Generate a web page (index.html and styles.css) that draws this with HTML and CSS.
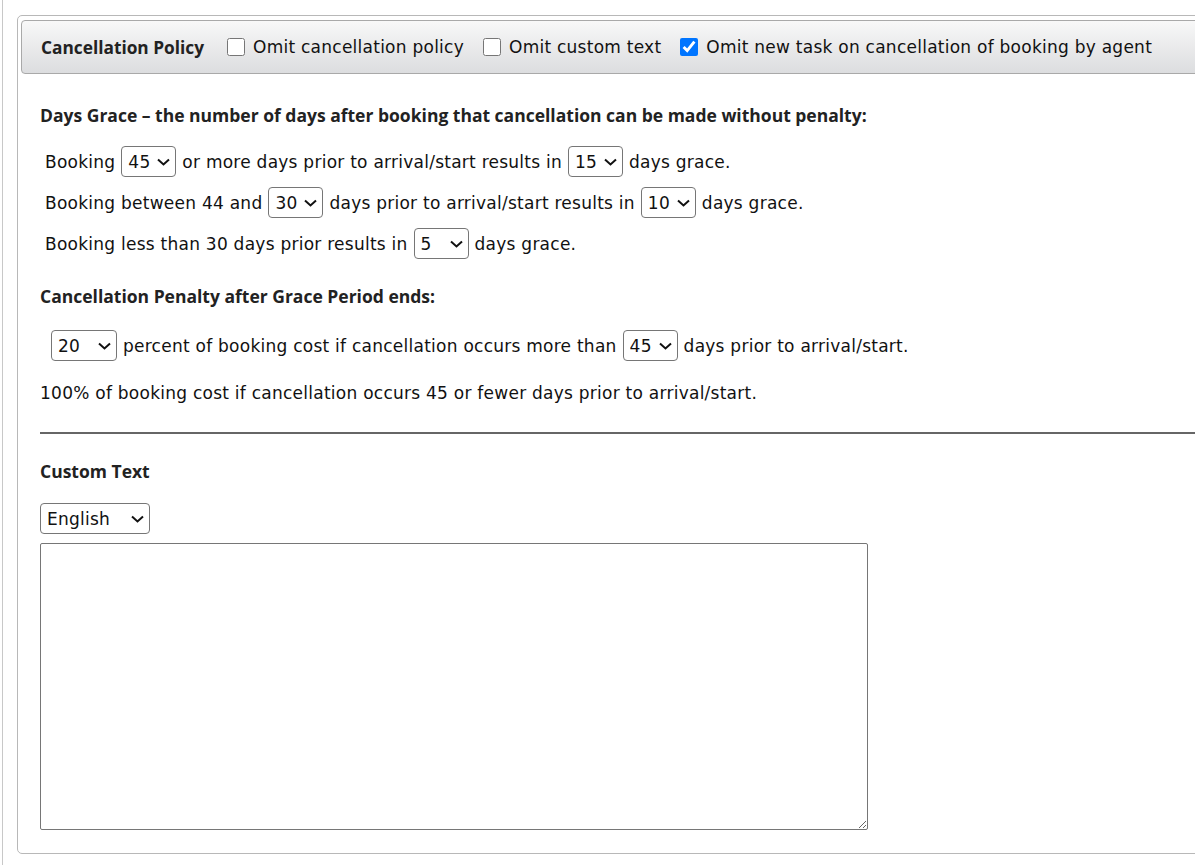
FILE: index.html
```html
<!DOCTYPE html>
<html lang="en">
<head>
<meta charset="utf-8">
<title>Cancellation Policy</title>
<link rel="stylesheet" href="styles.css">
</head>
<body>
<div class="page">
  <div class="panel">
    <div class="panel-head">
      <span class="panel-title">Cancellation Policy</span>
      <label class="check"><input type="checkbox"> Omit cancellation policy</label>
      <label class="check"><input type="checkbox"> Omit custom text</label>
      <label class="check"><input type="checkbox" checked> Omit new task on cancellation of booking by agent</label>
    </div>
    <div class="panel-body">
      <h3 class="heading grace-heading">Days Grace – the number of days after booking that cancellation can be made without penalty:</h3>
      <div class="rows">
        <div class="row">
          <span>Booking</span>
          <span class="sel w55"><select><option>45</option></select><svg viewBox="0 0 13 8" class="chev"><path d="M1 1.5 L6.5 6.5 L12 1.5" /></svg></span>
          <span>or more days prior to arrival/start results in</span>
          <span class="sel w55"><select><option>15</option></select><svg viewBox="0 0 13 8" class="chev"><path d="M1 1.5 L6.5 6.5 L12 1.5" /></svg></span>
          <span>days grace.</span>
        </div>
        <div class="row">
          <span>Booking between 44 and</span>
          <span class="sel w55"><select><option>30</option></select><svg viewBox="0 0 13 8" class="chev"><path d="M1 1.5 L6.5 6.5 L12 1.5" /></svg></span>
          <span>days prior to arrival/start results in</span>
          <span class="sel w55"><select><option>10</option></select><svg viewBox="0 0 13 8" class="chev"><path d="M1 1.5 L6.5 6.5 L12 1.5" /></svg></span>
          <span>days grace.</span>
        </div>
        <div class="row">
          <span>Booking less than 30 days prior results in</span>
          <span class="sel w55"><select><option>5</option></select><svg viewBox="0 0 13 8" class="chev"><path d="M1 1.5 L6.5 6.5 L12 1.5" /></svg></span>
          <span>days grace.</span>
        </div>
      </div>
      <h3 class="heading penalty-heading">Cancellation Penalty after Grace Period ends:</h3>
      <div class="row penalty-row">
        <span class="sel w66"><select><option>20</option></select><svg viewBox="0 0 13 8" class="chev"><path d="M1 1.5 L6.5 6.5 L12 1.5" /></svg></span>
        <span>percent of booking cost if cancellation occurs more than</span>
        <span class="sel w55"><select><option>45</option></select><svg viewBox="0 0 13 8" class="chev"><path d="M1 1.5 L6.5 6.5 L12 1.5" /></svg></span>
        <span>days prior to arrival/start.</span>
      </div>
      <p class="note">100% of booking cost if cancellation occurs 45 or fewer days prior to arrival/start.</p>
      <hr class="divider">
      <h3 class="heading custom-heading">Custom Text</h3>
      <span class="sel w110"><select><option>English</option></select><svg viewBox="0 0 13 8" class="chev"><path d="M1 1.5 L6.5 6.5 L12 1.5" /></svg></span>
      <textarea class="custom-text"></textarea>
    </div>
  </div>
</div>
</body>
</html>
```
FILE: styles.css
```css
html, body {
  margin: 0;
  padding: 0;
  overflow: hidden;
  background: #fff;
}
body {
  font-family: "DejaVu Sans", Verdana, sans-serif;
  font-size: 17px;
  letter-spacing: 0.25px;
  color: #111;
}
.page {
  margin-left: 2px;
  border-left: 1px solid #c8c8c8;
  height: 865px;
  padding: 15px 0 0 14px;
  box-sizing: border-box;
}
.panel {
  width: 1210px;
  height: 839px;
  box-sizing: border-box;
  border: 1px solid #b8b8b8;
  border-radius: 5px;
  padding: 4px 3px 0 3px;
}
.panel-head {
  display: flex;
  align-items: center;
  height: 54px;
  box-sizing: border-box;
  border: 1px solid #a9a9a9;
  border-radius: 4px;
  background: linear-gradient(#f8f8f8, #dcdddf);
  padding-left: 19px;
  gap: 19px;
}
.panel-title {
  font-family: "Open Sans", "Noto Sans", sans-serif;
  font-weight: 700;
  font-size: 17.3px;
  letter-spacing: 0;
  color: #222;
  margin-right: 4px;
}
.check {
  display: flex;
  align-items: center;
  gap: 8px;
  white-space: nowrap;
}
.check input {
  margin: 0;
  width: 18px;
  height: 18px;
}
.panel-body {
  padding: 0 0 0 19px;
}
.heading {
  font-family: "Open Sans", "Noto Sans", sans-serif;
  font-weight: 700;
  font-size: 17.5px;
  letter-spacing: 0;
  color: #222;
  margin: 0;
  line-height: 24px;
}
.grace-heading {
  margin-top: 29px;
}
.rows {
  display: flex;
  flex-direction: column;
  gap: 10px;
  margin-top: 19px;
  padding-left: 5px;
}
.row {
  display: flex;
  align-items: center;
  gap: 6px;
  white-space: nowrap;
}
.penalty-heading {
  margin-top: 25px;
}
.penalty-row {
  margin-top: 22px;
  padding-left: 11px;
}
.note {
  margin: 20px 0 0 0;
  line-height: 24px;
}
.divider {
  margin: 27px 0 0 0;
  border: 0;
  border-top: 2px solid #666;
  height: 0;
}
.custom-heading {
  margin-top: 25px;
}
.sel {
  position: relative;
  display: inline-block;
  height: 31px;
}
.sel select {
  appearance: none;
  -webkit-appearance: none;
  height: 31px;
  width: 100%;
  box-sizing: border-box;
  border: 1px solid #767676;
  border-radius: 4px;
  background: #fff;
  font-family: "DejaVu Sans", Verdana, sans-serif;
  font-size: 17px;
  letter-spacing: 0.25px;
  color: #111;
  padding: 0 0 0 6px;
  margin: 0;
}
.chev {
  position: absolute;
  right: 6px;
  top: 12px;
  width: 13px;
  height: 8px;
  pointer-events: none;
  fill: none;
  stroke: #111;
  stroke-width: 2;
}
.w55 { width: 55px; }
.w66 { width: 66px; }
.w110 { width: 110px; display: block; margin-top: 20px; }
.custom-text {
  display: block;
  margin-top: 9px;
  width: 828px;
  height: 287px;
  box-sizing: border-box;
  border: 1px solid #767676;
  border-radius: 2px;
  resize: both;
}
```
